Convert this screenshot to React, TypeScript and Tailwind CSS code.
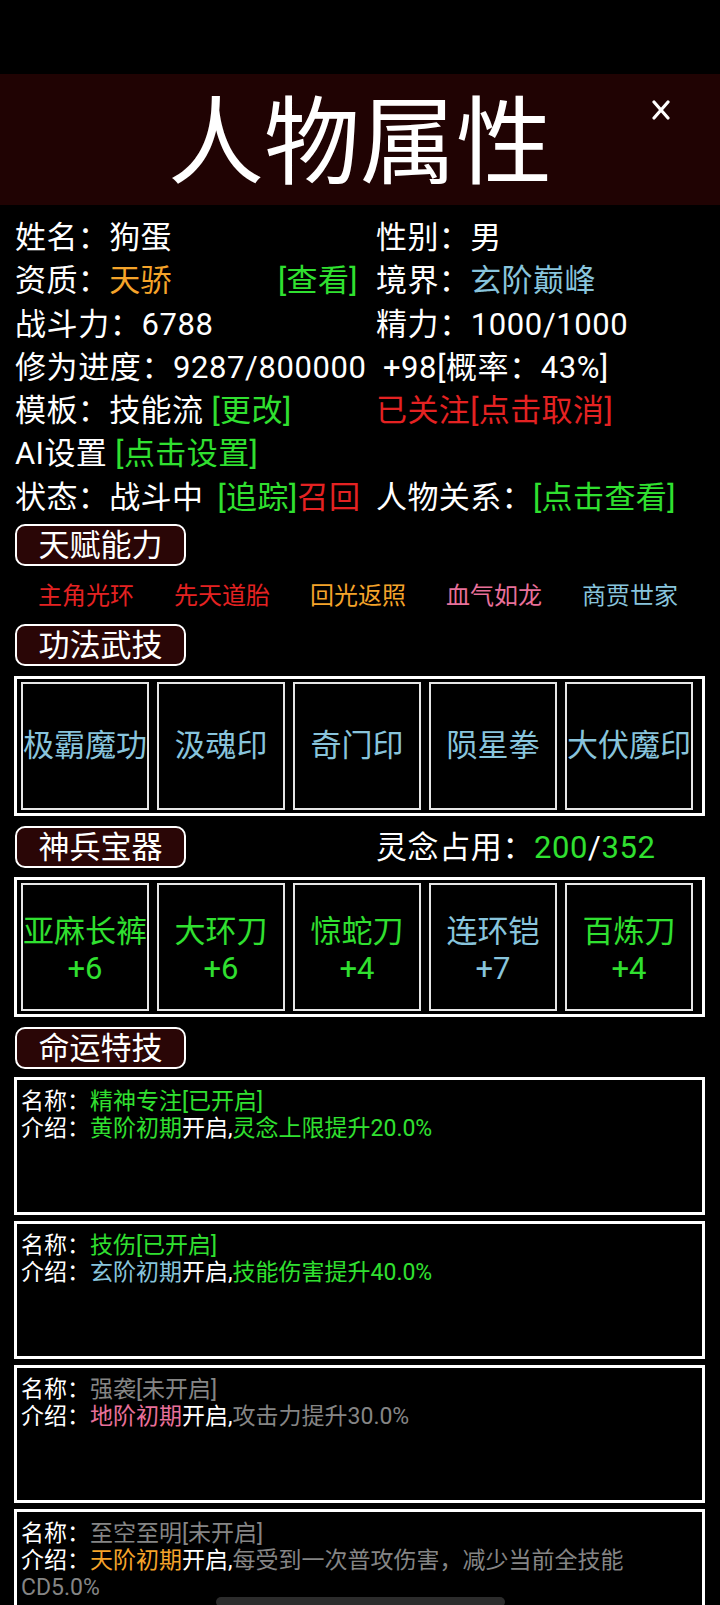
const FONT = 'font-["Roboto","Noto_Sans_CJK_SC",sans-serif]';

const green = 'text-[#30e030]';
const orange = 'text-[#f5a42a]';
const blue = 'text-[#88c4dc]';
const red = 'text-[#e42222]';
const pink = 'text-[#e8709a]';
const gray = 'text-[#858585]';

function Badge({ label }: { label: string }) {
  return (
    <div className="w-[171px] h-[42px] rounded-[10px] border-2 border-white bg-[#2a0606] flex items-center justify-center text-[31px] text-white leading-none">
      {label}
    </div>
  );
}

const talents = [
  { name: '主角光环', color: red },
  { name: '先天道胎', color: red },
  { name: '回光返照', color: orange },
  { name: '血气如龙', color: pink },
  { name: '商贾世家', color: blue },
];

const skills = ['极霸魔功', '汲魂印', '奇门印', '陨星拳', '大伏魔印'];

const gear = [
  { name: '亚麻长裤', lv: '+6', color: green },
  { name: '大环刀', lv: '+6', color: green },
  { name: '惊蛇刀', lv: '+4', color: green },
  { name: '连环铠', lv: '+7', color: blue },
  { name: '百炼刀', lv: '+4', color: green },
];

type Fate = {
  name: string;
  open: boolean;
  stage: string;
  stageColor: string;
  desc: string;
};

const fates: Fate[] = [
  { name: '精神专注', open: true, stage: '黄阶初期', stageColor: green, desc: '灵念上限提升20.0%' },
  { name: '技伤', open: true, stage: '玄阶初期', stageColor: blue, desc: '技能伤害提升40.0%' },
  { name: '强袭', open: false, stage: '地阶初期', stageColor: pink, desc: '攻击力提升30.0%' },
  { name: '至空至明', open: false, stage: '天阶初期', stageColor: orange, desc: '每受到一次普攻伤害，减少当前全技能CD5.0%' },
];

function FateBox({ fate }: { fate: Fate }) {
  const c = fate.open ? green : gray;
  return (
    <div className="w-[691px] h-[138px] border-[3px] border-white pl-[4px] pr-[40px] pt-[8px] text-[23px] leading-[27px] text-white">
      <div>
        名称：<span className={c}>{fate.name}{fate.open ? '[已开启]' : '[未开启]'}</span>
      </div>
      <div>
        介绍：<span className={fate.stageColor}>{fate.stage}</span>开启,<span className={c}>{fate.desc}</span>
      </div>
    </div>
  );
}

export default function App() {
  return (
    <div className={`relative w-[720px] h-[1605px] overflow-hidden bg-black text-white ${FONT}`}>
      {/* status bar */}
      <div className="h-[74px]" />

      {/* header */}
      <div className="relative h-[131px] bg-[#200303] flex items-center justify-center pt-[6px]">
        <h1 className="text-[96px] leading-none text-white font-normal">人物属性</h1>
        <svg className="absolute left-[652px] top-[26px]" width="18" height="20" viewBox="0 0 18 20">
          <path d="M2 2 L16 18 M16 2 L2 18" stroke="white" strokeWidth="3.2" strokeLinecap="round" />
        </svg>
      </div>

      {/* info rows */}
      <div className="mt-[11px] pl-[15px] grid grid-cols-[361px_1fr] text-[31px] tracking-[0.4px] leading-[43.3px] whitespace-nowrap">
        <div>姓名：狗蛋</div>
        <div>性别：男</div>

        <div className="flex justify-between pr-[18px]">
          <span>
            资质：<span className={orange}>天骄</span>
          </span>
          <span className={green}>[查看]</span>
        </div>
        <div>
          境界：<span className={blue}>玄阶巅峰</span>
        </div>

        <div className="tracking-[0.6px]">战斗力：6788</div>
        <div className="tracking-[0.6px]">精力：1000/1000</div>

        <div className="col-span-2 tracking-[0.6px]">
          修为进度：9287/800000 <span className="ml-[8px]">+98[概率：43%]</span>
        </div>

        <div>
          模板：技能流 <span className={green}>[更改]</span>
        </div>
        <div className={red}>已关注[点击取消]</div>

        <div className="col-span-2">
          AI设置 <span className={green}>[点击设置]</span>
        </div>

        <div>
          状态：战斗中 <span className={`ml-[6px] ${green}`}>[追踪]</span>
          <span className={red}>召回</span>
        </div>
        <div>
          人物关系：<span className={green}>[点击查看]</span>
        </div>
      </div>

      {/* talents */}
      <div className="mt-[5px] pl-[15px]">
        <Badge label="天赋能力" />
      </div>
      <div className="mt-[10px] ml-[18px] w-[680px] h-[40px] grid grid-cols-5 items-center justify-items-center text-[24px]">
        {talents.map((t) => (
          <span key={t.name} className={t.color}>
            {t.name}
          </span>
        ))}
      </div>

      {/* skills */}
      <div className="mt-[8px] pl-[15px]">
        <Badge label="功法武技" />
      </div>
      <div className="mt-[10px] ml-[14px] w-[691px] border-[3px] border-white pl-[4px] pr-[9px] py-[3px] flex gap-[8px]">
        {skills.map((s) => (
          <div
            key={s}
            className={`w-[128px] h-[128px] border-2 border-[#e6e6e6] flex items-center justify-center text-[31px] whitespace-nowrap ${blue}`}
          >
            {s}
          </div>
        ))}
      </div>

      {/* gear */}
      <div className="mt-[10px] pl-[15px] grid grid-cols-[361px_1fr] items-center">
        <Badge label="神兵宝器" />
        <div className="text-[31px] tracking-[0.6px] leading-none">
          灵念占用：<span className={green}>200</span>/<span className={green}>352</span>
        </div>
      </div>
      <div className="mt-[9px] ml-[14px] w-[691px] border-[3px] border-white pl-[4px] pr-[9px] py-[3px] flex gap-[8px]">
        {gear.map((g) => (
          <div
            key={g.name}
            className={`w-[128px] h-[128px] border-2 border-[#e6e6e6] flex flex-col items-center justify-center pt-[6px] text-[31px] leading-[37px] whitespace-nowrap ${g.color}`}
          >
            <span>{g.name}</span>
            <span>{g.lv}</span>
          </div>
        ))}
      </div>

      {/* fate */}
      <div className="mt-[10px] pl-[15px]">
        <Badge label="命运特技" />
      </div>
      <div className="mt-[8px] ml-[14px] flex flex-col gap-[6px]">
        {fates.map((f) => (
          <FateBox key={f.name} fate={f} />
        ))}
      </div>

      {/* home indicator */}
      <div className="absolute left-[216px] top-[1597px] w-[289px] h-[10px] rounded-full bg-[#2c2c2c]" />
    </div>
  );
}
